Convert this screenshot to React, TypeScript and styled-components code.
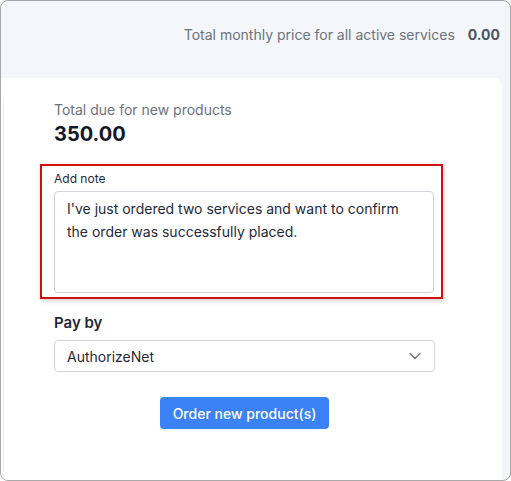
import React from "react";
import styled, { createGlobalStyle } from "styled-components";

const Global = createGlobalStyle`
  html, body { margin: 0; padding: 0; background: #ffffff; }
  body { font-family: Inter, "Noto Sans", sans-serif; }
  * { box-sizing: border-box; }
`;

const Frame = styled.div`
  width: 511px;
  height: 481px;
  border: 1px solid #a8a8a8;
  border-radius: 8px;
  overflow: hidden;
  background: #f4f6f9;
  display: flex;
  flex-direction: column;
`;

const Header = styled.div`
  height: 77px;
  display: flex;
  align-items: flex-start;
  justify-content: flex-end;
  gap: 13px;
  padding: 24px 10px 0 0;
  font-size: 14px;
  line-height: 20px;
`;

const HeaderLabel = styled.span`
  color: #6b7280;
`;

const HeaderValue = styled.span`
  color: #4b5563;
  font-weight: 700;
`;

const Card = styled.div`
  flex: 1;
  margin-right: 8px;
  background: #ffffff;
  border-top-right-radius: 8px;
  padding-top: 19px;
  display: flex;
`;

const CardBody = styled.div`
  flex: 1;
  margin-left: 2px;
  border-left: 1px solid #eceef2;
  padding: 3px 67px 0 50px;
  display: flex;
  flex-direction: column;
`;

const DueLabel = styled.div`
  font-size: 14px;
  line-height: 20px;
  color: #6b7280;
`;

const DueValue = styled.div`
  margin-top: 1px;
  font-size: 20px;
  line-height: 26px;
  font-weight: 700;
  color: #111827;
`;

const Highlight = styled.div`
  margin: 17px -8px 0 -14px;
  border: 2px solid #d40f0f;
  box-shadow: 1px 2px 5px rgba(0, 0, 0, 0.18);
  padding: 5px 7px 4px 12px;
  display: flex;
  flex-direction: column;
  gap: 4px;
`;

const SmallLabel = styled.label`
  font-size: 12px;
  line-height: 16px;
  color: #1f2937;
`;

const NoteArea = styled.textarea`
  height: 102px;
  width: 100%;
  border: 1px solid #d1d5db;
  border-radius: 4px;
  padding: 5px 12px;
  font-family: Inter, "Noto Sans", sans-serif;
  font-size: 14px;
  line-height: 23px;
  color: #1f2937;
  resize: none;
  outline: none;
`;

const SectionLabel = styled.div`
  margin-top: 13px;
  font-size: 15px;
  line-height: 22px;
  font-weight: 600;
  color: #1f2937;
`;

const Select = styled.div`
  margin-top: 6px;
  height: 32px;
  border: 1px solid #d1d5db;
  border-radius: 4px;
  display: flex;
  align-items: center;
  justify-content: space-between;
  padding: 0 13px 0 12px;
  font-size: 14px;
  color: #1f2937;
`;

const ButtonRow = styled.div`
  margin-top: 25px;
  display: flex;
  justify-content: center;
`;

const Button = styled.button`
  height: 32px;
  padding: 0 13px;
  border: none;
  border-radius: 4px;
  background: #3b82f6;
  color: #ffffff;
  font-family: Inter, "Noto Sans", sans-serif;
  font-size: 14px;
  font-weight: 500;
`;

export default function App() {
  return (
    <>
      <Global />
      <Frame>
        <Header>
          <HeaderLabel>Total monthly price for all active services</HeaderLabel>
          <HeaderValue>0.00</HeaderValue>
        </Header>
        <Card>
          <CardBody>
            <DueLabel>Total due for new products</DueLabel>
            <DueValue>350.00</DueValue>
            <Highlight>
              <SmallLabel>Add note</SmallLabel>
              <NoteArea
                readOnly
                value={"I've just ordered two services and want to confirm the order was successfully placed."}
              />
            </Highlight>
            <SectionLabel>Pay by</SectionLabel>
            <Select>
              <span>AuthorizeNet</span>
              <svg width="12" height="8" viewBox="0 0 12 8" fill="none">
                <path d="M1 1.5l5 5 5-5" stroke="#6b7280" strokeWidth="1.3" strokeLinecap="round" strokeLinejoin="round" />
              </svg>
            </Select>
            <ButtonRow>
              <Button>Order new product(s)</Button>
            </ButtonRow>
          </CardBody>
        </Card>
      </Frame>
    </>
  );
}
